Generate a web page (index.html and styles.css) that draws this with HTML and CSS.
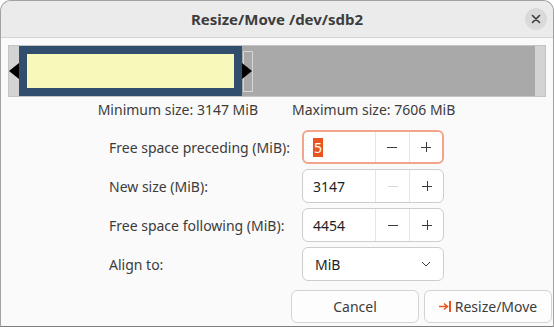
FILE: index.html
```html
<!DOCTYPE html>
<html lang="en">
  <head>
    <meta charset="UTF-8" />
    <title>Resize/Move /dev/sdb2</title>
    <link rel="stylesheet" href="styles.css">
  </head>
  <body>
    <div class="window">
      <div class="header">
        <span></span>
        <h1 class="title">Resize/Move /dev/sdb2</h1>
        <button class="close" type="button">
          <svg width="10" height="10" viewBox="0 0 10 10">
            <path d="M1.5 1.5 L8.5 8.5 M8.5 1.5 L1.5 8.5" stroke="#3a3a3a" stroke-width="1.6" stroke-linecap="round" />
          </svg>
        </button>
      </div>

      <div class="content">
        <div class="graph">
          <div class="edge"></div>
          <div class="part"></div>
          <div class="unalloc"></div>
          <div class="edge"></div>
          <div class="arrow-left"></div>
          <div class="handle"></div>
          <div class="arrow-right"></div>
        </div>

        <div class="sizes">
          <span>Minimum size: 3147 MiB</span>
          <span>Maximum size: 7606 MiB</span>
        </div>

        <div class="form">
          <label>Free space preceding (MiB):</label>
          <div class="spin focus">
            <span class="value"><span class="sel">5</span></span>
            <span class="btn">
              <svg width="12" height="12" viewBox="0 0 12 12"><path d="M1 6.5 H11" stroke="#3c3c3c" stroke-width="1" /></svg>
            </span>
            <span class="btn">
              <svg width="12" height="12" viewBox="0 0 12 12"><path d="M1 6.5 H11 M6.5 1 V11" stroke="#3c3c3c" stroke-width="1" /></svg>
            </span>
          </div>

          <label>New size (MiB):</label>
          <div class="spin">
            <span class="value">3147</span>
            <span class="btn">
              <svg width="12" height="12" viewBox="0 0 12 12"><path d="M1 6.5 H11" stroke="#d8d8d8" stroke-width="1" /></svg>
            </span>
            <span class="btn">
              <svg width="12" height="12" viewBox="0 0 12 12"><path d="M1 6.5 H11 M6.5 1 V11" stroke="#3c3c3c" stroke-width="1" /></svg>
            </span>
          </div>

          <label>Free space following (MiB):</label>
          <div class="spin">
            <span class="value">4454</span>
            <span class="btn">
              <svg width="12" height="12" viewBox="0 0 12 12"><path d="M1 6.5 H11" stroke="#3c3c3c" stroke-width="1" /></svg>
            </span>
            <span class="btn">
              <svg width="12" height="12" viewBox="0 0 12 12"><path d="M1 6.5 H11 M6.5 1 V11" stroke="#3c3c3c" stroke-width="1" /></svg>
            </span>
          </div>

          <label>Align to:</label>
          <div class="combo">
            <span>MiB</span>
            <svg width="10" height="6" viewBox="0 0 10 6"><path d="M1 1 L5 5 L9 1" fill="none" stroke="#3c3c3c" stroke-width="1" /></svg>
          </div>
        </div>

        <div class="actions">
          <button type="button">Cancel</button>
          <button type="button">
            <svg width="13" height="11" viewBox="0 0 13 11">
              <path d="M0 5.5 H8 M5 2.5 L8.5 5.5 L5 8.5" fill="none" stroke="#e95420" stroke-width="1.5" />
              <path d="M11 0 V11" stroke="#e95420" stroke-width="2" />
            </svg>
            Resize/Move
          </button>
        </div>
      </div>
    </div>
  </body>
</html>
```

FILE: styles.css
```css
html {
  box-sizing: border-box;
}

*,
*:before,
*:after {
  box-sizing: inherit;
}

body,
h1,
p {
  margin: 0;
  padding: 0;
}

body {
  background: #ffffff;
  font-family: "Noto Sans", "DejaVu Sans", sans-serif;
  font-size: 14px;
  color: #3c3c3c;
}

.window {
  width: 554px;
  height: 327px;
  border: 1px solid #a2a2a2;
  border-bottom-color: #7d7d7d;
  border-radius: 11px 11px 0 0;
  overflow: hidden;
  background: #fafafa;
  display: flex;
  flex-direction: column;
}

.header {
  height: 37px;
  background: #ebebeb;
  border-bottom: 1px solid #d4d4d4;
  display: grid;
  grid-template-columns: 1fr auto 1fr;
  align-items: center;
}

.title {
  font-size: 15px;
  font-weight: bold;
  color: #3d3d3d;
}

.close {
  justify-self: end;
  margin-right: 6px;
  width: 22px;
  height: 22px;
  border: none;
  border-radius: 50%;
  background: #dadada;
  padding: 0;
  display: flex;
  align-items: center;
  justify-content: center;
}

.content {
  padding: 7px 1px 0 7px;
  display: flex;
  flex-direction: column;
}

.graph {
  position: relative;
  width: 538px;
  height: 52px;
  border: 1px solid #c4c4c4;
  background: #d3d3d3;
  display: flex;
}

.graph .edge {
  width: 10px;
}

.graph .part {
  width: 223px;
  border: 8px solid #324e6e;
  background: #f8f8bb;
}

.graph .unalloc {
  flex: 1;
  background: #a9a9a9;
}

.arrow-left {
  position: absolute;
  left: 0;
  top: 17px;
  width: 0;
  height: 0;
  border-top: 8px solid transparent;
  border-bottom: 8px solid transparent;
  border-right: 10px solid #000000;
}

.arrow-right {
  position: absolute;
  left: 233px;
  top: 17px;
  width: 0;
  height: 0;
  border-top: 8px solid transparent;
  border-bottom: 8px solid transparent;
  border-left: 10px solid #000000;
}

.handle {
  position: absolute;
  left: 234px;
  top: 5px;
  width: 10px;
  height: 41px;
  border: 1px solid #d6d6d6;
}

.sizes {
  display: flex;
  justify-content: center;
  gap: 34px;
  height: 24px;
  align-items: center;
  padding-right: 7px;
}

.form {
  margin-top: 9px;
  display: grid;
  grid-template-columns: 183px 142px;
  grid-auto-rows: 34px;
  column-gap: 10px;
  row-gap: 5px;
  justify-content: center;
  align-items: center;
  padding-right: 7px;
}

.spin {
  height: 34px;
  border: 1px solid #cdcdcd;
  border-radius: 6px;
  background: #ffffff;
  display: flex;
}

.spin.focus {
  border: 2px solid #f2a58b;
}

.spin .value {
  width: 72px;
  padding-left: 10px;
  display: flex;
  align-items: center;
  color: #1f1f1f;
}

.spin.focus .value {
  width: 71px;
  padding-left: 9px;
}

.sel {
  background: #e95420;
  color: #ffffff;
  padding: 0 1px;
  line-height: 19px;
}

.spin .btn {
  flex: 1;
  border-left: 1px solid #e6e6e6;
  display: flex;
  align-items: center;
  justify-content: center;
}

.combo {
  height: 34px;
  border: 1px solid #cdcdcd;
  border-radius: 6px;
  background: #ffffff;
  display: flex;
  align-items: center;
  justify-content: space-between;
  padding: 0 12px 0 12px;
  color: #1f1f1f;
}

.actions {
  margin-top: 9px;
  display: flex;
  justify-content: flex-end;
  gap: 5px;
}

.actions button {
  width: 128px;
  height: 33px;
  border: 1px solid #d3d3d3;
  border-radius: 6px;
  background: #fdfdfd;
  font-family: inherit;
  font-size: 14px;
  color: #3c3c3c;
  display: flex;
  align-items: center;
  justify-content: center;
  gap: 3px;
  padding: 0;
}
```
